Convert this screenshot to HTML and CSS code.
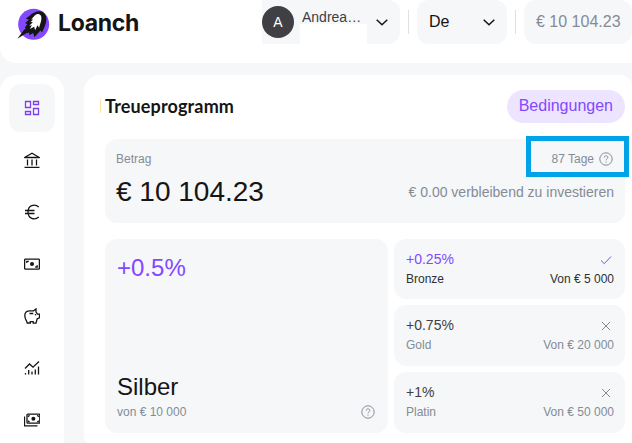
FILE: index.html
```html
<!DOCTYPE html>
<html lang="de">
<head>
  <meta charset="UTF-8">
  <title>Loanch</title>
  <link rel="stylesheet" href="styles.css">
</head>
<body>

  <header class="header">
    <div class="logo">
      <svg class="logo-mark" viewBox="50 20 100 102">
        <circle cx="100.500" cy="71.500" r="47" fill="#8448ff"/>
        <path d="M51 116 L71 89 L78 82 L73 82 L81 72 L75 68 L86 58 L77 54 L89 45 C99 36 112 30 124 33 C138 38 141 52 138 66 C135 80 130 86 126 97 L121 91 L103 111 L99 98 L87 105 L87 97 L78 99 Z" fill="#151515"/>
        <path d="M93 57 L103 46 C110 38 120 39 123 47 C126 58 121 68 117 82 L112 75 L105 90 L102 79 L89 86 L95 75 L87 76 L98 66 L91 65 L99 57 Z" fill="#fff"/>
      </svg>
      <span class="logo-text">Loanch</span>
    </div>
    <div class="user">
      <span class="avatar">A</span>
      <span class="user-name">Andrea…</span>
      <svg class="chevron" viewBox="0 0 12 7"><path d="M.7.7 6 5.800 11.300.7"/></svg>
    </div>
    <span class="divider"></span>
    <div class="lang">
      <span>De</span>
      <svg class="chevron" viewBox="0 0 12 7"><path d="M.7.7 6 5.800 11.300.7"/></svg>
    </div>
    <span class="divider"></span>
    <div class="balance">€ 10 104.23</div>
  </header>

  <div class="layout">
    <nav class="sidebar">
      <a class="nav-item active">
        <svg viewBox="0 0 16 16"><path d="M1.500 1.500h5v6h-5zM9.500 1.500h5v3h-5zM1.500 11.500h5v3h-5zM9.500 8.500h5v6h-5z"/></svg>
      </a>
      <a class="nav-item">
        <svg viewBox="0 0 16 16"><path d="M1 5.300 8 1.200l7 4.100zM.5 5.500h15M.5 15.500h15M3.500 7.500v6M8 7.500v6M12.500 7.500v6"/></svg>
      </a>
      <a class="nav-item">
        <svg viewBox="0 0 16 16"><path d="M14.800 3C10.500-.5 4 1.300 4 8s6.500 8.500 10.800 5M1 6.500h9.500M1 9.500h9.500"/></svg>
      </a>
      <a class="nav-item">
        <svg viewBox="0 0 16 16"><rect x=".6" y="3.100" width="14.800" height="10" rx=".8"/><path d="M2.800 7V5.300h2M13.200 9.200v1.800h-2"/><circle class="dot" cx="8" cy="8.100" r="2"/></svg>
      </a>
      <a class="nav-item">
        <svg viewBox="0 0 16 16"><path d="M6 2.800h3.500L12 1v3l1.500 2.200h2v3.600l-2.300 1-1.200 4.400H9.200v-1.500H6.300V15H3.200C2.800 12.500.8 11.500.8 7.500.8 4.500 2.500 2.800 6 2.800zM5.500 5.500h3.800"/><circle class="dot" cx="11.500" cy="6.800" r=".8"/></svg>
      </a>
      <a class="nav-item">
        <svg viewBox="0 0 16 16"><path d="M1 8.500 5.500 4l3.500 3.200 6-5.700M1.500 13v1.500M4.700 10v4.500M8 11.500v3M11.300 9.500v5M14.500 6.500v8"/></svg>
      </a>
      <a class="nav-item">
        <svg viewBox="0 0 16 16"><rect x="3" y="2.200" width="12.800" height="9" rx=".8"/><path d="M.5 4.500v9.300h13M4 4.700l1.500-1.500M14.800 4.700l-1.500-1.500M4 8.700l1.500 1.500M14.800 8.700l-1.500 1.500"/><circle class="dot" cx="9.400" cy="6.700" r="2"/></svg>
      </a>
    </nav>

    <main class="card">
      <div class="card-head">
        <h1>Treueprogramm</h1>
        <a class="terms">Bedingungen</a>
      </div>

      <section class="amount">
        <div class="amount-row">
          <span class="label">Betrag</span>
          <span class="days">87 Tage
            <svg class="help" viewBox="0 0 14 14"><circle cx="7" cy="7" r="6.200"/><path d="M5.200 5.600C5.200 3.200 8.800 3.200 8.800 5.500 8.800 6.800 7 6.900 7 8.300M7 9.600v1.100"/></svg>
          </span>
        </div>
        <div class="amount-row">
          <span class="amount-value">€ 10 104.23</span>
          <span class="remaining">€ 0.00 verbleibend zu investieren</span>
        </div>
        <span class="marker"></span>
      </section>

      <section class="levels">
        <div class="current">
          <div class="current-rate">+0.5%</div>
          <div class="current-name">Silber</div>
          <div class="current-foot">
            <span>von € 10 000</span>
            <svg class="help" viewBox="0 0 14 14"><circle cx="7" cy="7" r="6.200"/><path d="M5.200 5.600C5.200 3.200 8.800 3.200 8.800 5.500 8.800 6.800 7 6.900 7 8.300M7 9.600v1.100"/></svg>
          </div>
        </div>

        <div class="level-list">
          <div class="level reached">
            <div class="level-row rate">+0.25% <svg viewBox="0 0 12 10"><path d="M1 5.500 4.300 8.700 11 1.500"/></svg></div>
            <div class="level-row name"><span>Bronze</span><span>Von € 5 000</span></div>
          </div>
          <div class="level">
            <div class="level-row rate">+0.75% <svg viewBox="0 0 12 10"><path d="M2 1l8 8M10 1 2 9"/></svg></div>
            <div class="level-row name"><span>Gold</span><span>Von € 20 000</span></div>
          </div>
          <div class="level">
            <div class="level-row rate">+1% <svg viewBox="0 0 12 10"><path d="M2 1l8 8M10 1 2 9"/></svg></div>
            <div class="level-row name"><span>Platin</span><span>Von € 50 000</span></div>
          </div>
        </div>
      </section>
    </main>
  </div>

</body>
</html>
```
FILE: styles.css
```css
* {
  box-sizing: border-box;
}
body {
  margin: 0;
  height: 443px;
  overflow: hidden;
  font-family: "Liberation Sans", Arial, sans-serif;
  font-size: 12px;
  color: #151515;
  background: #f5f7f9;
}
svg {
  fill: none;
  stroke: currentColor;
  flex: none;
}

/* header */
.header {
  display: flex;
  align-items: flex-start;
  height: 63px;
  background: #fff;
  border-radius: 0 0 0 16px;
}
.logo {
  display: flex;
  width: 262px;
  padding: 7px 0 0 17px;
}
.logo-mark {
  width: 33px;
  height: 34px;
  stroke: none;
}
.logo-text {
  margin-left: 8px;
  font: 700 23px/32px Inter, sans-serif;
  letter-spacing: -0.3px;
}
.user, .lang, .balance {
  height: 44px;
  background: #f5f7f9;
  border-radius: 12px;
}
.user {
  position: relative;
  display: flex;
  width: 138px;
  padding-right: 12px;
  border-radius: 0 12px 12px 0;
}
.user::after {
  content: "";
  position: absolute;
  left: 38px;
  top: 24px;
  width: 67px;
  height: 20px;
  background: #fff;
}
.avatar {
  width: 32px;
  height: 32px;
  margin-top: 6px;
  border-radius: 50%;
  background: #404044;
  color: #fff;
  font-size: 14px;
  line-height: 33px;
  text-align: center;
}
.user-name {
  flex: 1;
  margin: 9px 0 0 8px;
  font-size: 14px;
  line-height: 16px;
  color: #404044;
}
.chevron {
  width: 12px;
  height: 7px;
  margin-top: 19px;
  stroke-width: 1.5;
}
.divider {
  width: 1px;
  height: 24px;
  margin: 10px 8px 0;
  background: #dfe0e4;
}
.lang {
  display: flex;
  justify-content: space-between;
  width: 90px;
  padding: 0 12px;
  font-size: 16px;
  line-height: 44px;
}
.balance {
  width: 108px;
  padding-left: 12px;
  font-size: 16px;
  line-height: 44px;
  color: #858b96;
}

/* layout */
.layout {
  display: flex;
  gap: 20px;
  height: 368px;
  margin-top: 12px;
  overflow: hidden;
}
.sidebar {
  flex: none;
  width: 64px;
  padding: 9px 9px 0;
  background: #fff;
  border-radius: 16px 16px 0 0;
}
.nav-item {
  display: flex;
  align-items: center;
  justify-content: center;
  width: 46px;
  height: 48px;
  margin-bottom: 4px;
  border-radius: 12px;
}
.nav-item:last-child {
  height: 47px;
  margin-bottom: 0;
}
.nav-item svg {
  width: 16px;
  height: 16px;
  stroke-width: 1.3;
}
.nav-item.active {
  background: #f5f7f9;
  color: #7b40f2;
}
.dot {
  fill: currentColor;
  stroke: none;
}

/* card */
.card {
  flex: 1;
  padding: 15px 7px 0 21px;
  background: #fff;
  border-radius: 16px 12px 0 6px;
}
.card-head {
  display: flex;
  justify-content: space-between;
  height: 49px;
}
h1 {
  position: relative;
  margin: 0;
  font: 700 18px/32px Lato, sans-serif;
  letter-spacing: 0.15px;
}
h1::before {
  content: "";
  position: absolute;
  left: -5px;
  top: 9px;
  width: 1px;
  height: 14px;
  background: #ffe2a0;
}
.terms {
  height: 33px;
  padding: 0 12px;
  border-radius: 17px;
  background: #ede4ff;
  color: #8448ff;
  font-size: 16px;
  line-height: 32px;
}
.amount {
  position: relative;
  height: 84px;
  padding: 13px 11px 0;
  background: #f5f7f9;
  border-radius: 12px;
}
.amount-row {
  display: flex;
  justify-content: space-between;
}
.label, .days, .remaining {
  color: #858b96;
  line-height: 14px;
}
.days {
  display: flex;
  gap: 5px;
  margin-right: 1px;
}
.help {
  width: 14px;
  height: 14px;
  color: #858b96;
}
.amount-value {
  margin-top: 10px;
  font-size: 28px;
  line-height: 32px;
}
.remaining {
  margin-top: 18px;
  font-size: 14px;
  line-height: 16px;
}
.marker {
  position: absolute;
  right: -4px;
  top: -3px;
  width: 103px;
  height: 41px;
  border: 5px solid #00a3e8;
}

.levels {
  display: flex;
  gap: 6px;
  margin-top: 16px;
}
.current {
  display: flex;
  flex-direction: column;
  width: 283px;
  height: 194px;
  padding: 15px 13px 0 12px;
  background: #f5f7f9;
  border-radius: 12px;
}
.current-rate {
  flex: 1;
  font-size: 24px;
  line-height: 28px;
  color: #8448ff;
}
.current-name {
  font-size: 24px;
  line-height: 28px;
}
.current-foot {
  display: flex;
  justify-content: space-between;
  height: 32px;
  padding-top: 4px;
  line-height: 14px;
  color: #858b96;
}
.level-list {
  display: grid;
  flex: 1;
  grid-template-rows: 60px 61px 61px;
  gap: 6px;
}
.level {
  padding: 12px 11px 0 12px;
  background: #f5f7f9;
  border-radius: 12px;
  color: #858b96;
}
.level-row {
  display: flex;
  justify-content: space-between;
}
.rate {
  font-size: 14px;
  line-height: 16px;
  color: #404044;
}
.rate svg {
  width: 12px;
  height: 10px;
  margin: 4px 2px 0 0;
  color: #858b96;
}
.name {
  margin-top: 5px;
  line-height: 14px;
}
.reached, .reached .name {
  color: #303034;
}
.reached .rate, .reached .rate svg {
  color: #8448ff;
}
```
